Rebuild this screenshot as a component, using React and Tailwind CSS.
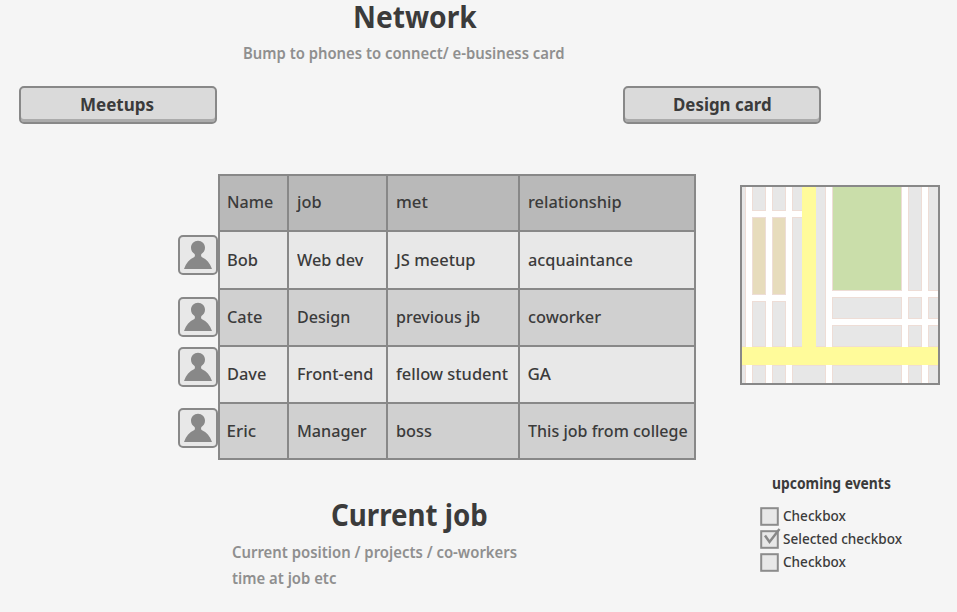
import { useLayoutEffect, useRef } from "react";

// Condenses or widens a single line of text so that it spans a given width.
function Fit({ w, children, className = "" }) {
  const ref = useRef(null);
  useLayoutEffect(() => {
    const el = ref.current;
    const fit = () => {
      el.style.transform = `scaleX(${w / el.offsetWidth})`;
    };
    fit();
    document.fonts.ready.then(fit);
  }, [w, children]);
  return (
    <span ref={ref} className={`inline-block w-max origin-left whitespace-nowrap ${className}`}>
      {children}
    </span>
  );
}

function Button({ label, w, indent }) {
  return (
    <button className={`flex h-[38px] w-[198px] items-start rounded-[5px] border-2 border-[#888] bg-[#dadada] pt-1 text-[18.5px] leading-6 font-bold shadow-[inset_0_-3px_0_#ababab] ${indent}`}>
      <Fit w={w}>{label}</Fit>
    </button>
  );
}

function Avatar({ className }) {
  return (
    <svg viewBox="0 0 40 40" className={`block size-10 ${className}`}>
      <rect x="1" y="1" width="38" height="38" rx="4" fill="#e8e8e8" stroke="#888" strokeWidth="2" />
      <path
        d="M20 5.800C16.100 5.800 13 8.900 13 12.800C13 15.500 14.500 17.700 16.600 19C17.200 20.500 17 21.500 16 22.300C11.500 24.200 8.200 28 6 34H34C31.800 28 28.500 24.200 24 22.300C23 21.500 22.800 20.500 23.400 19C25.500 17.700 27 15.500 27 12.800C27 8.900 23.900 5.800 20 5.800Z"
        fill="#888"
      />
    </svg>
  );
}

const rows = [
  [["Name", 46.5], ["job", 25], ["met", 31.5], ["relationship", 93.5]],
  [["Bob", 31], ["Web dev", 66], ["JS meetup", 79.5], ["acquaintance", 104.5]],
  [["Cate", 35.5], ["Design", 53], ["previous jb", 84], ["coworker", 73]],
  [["Dave", 39.5], ["Front-end", 76.5], ["fellow student", 112], ["GA", 24]],
  [["Eric", 30], ["Manager", 69.5], ["boss", 35.5], ["This job from college", 159.5]],
];
const rowBg = ["bg-[#b9b9b9] pb-[2px]", "bg-[#e8e8e8]", "bg-[#d0d0d0] pb-[2px]", "bg-[#e8e8e8] pb-[2px]", "bg-[#d0d0d0]"];

function People() {
  return (
    <div className="grid grid-cols-[67px_97px_130px_174px] grid-rows-[54px_56px_55px_55px_54px] gap-[2px] border-2 border-[#888] bg-[#888] text-[17px] leading-6 font-medium">
      {rows.map((row, r) =>
        row.map(([text, w], c) => (
          <div key={text} className={`flex items-center ${c === 0 ? "pl-[6.5px]" : "pl-[7.5px]"} ${rowBg[r]}`}>
            <Fit w={w}>{text}</Fit>
          </div>
        ))
      )}
    </div>
  );
}

// City blocks as [x, y, width, height].
const blocks = [
  [-1, -1, 5, 161], [10, -1, 14, 25], [30, -1, 14, 25], [50, -1, 11, 25],
  [50, 30, 11, 130], [10, 114, 14, 46], [30, 114, 14, 46], [73, -1, 11, 161],
  [166, -1, 14, 105], [186, -1, 11, 105],
  [90, 110, 70, 22], [166, 110, 14, 22], [186, 110, 11, 22],
  [90, 138, 70, 22], [166, 138, 14, 22], [186, 138, 11, 22],
  [-1, 178, 5, 19], [10, 178, 14, 19], [30, 178, 14, 19], [50, 178, 34, 19],
  [90, 178, 70, 19], [166, 178, 14, 19], [186, 178, 11, 19],
];

function Block({ box: [x, y, w, h], fill }) {
  return <rect x={x + 0.5} y={y + 0.5} width={w - 1} height={h - 1} fill={fill} stroke="#eeddd6" />;
}

function CityMap() {
  return (
    <svg viewBox="0 0 196 196" className="box-border block size-[200px] border-2 border-[#888] bg-white">
      {blocks.map((b) => (
        <Block key={b.join()} box={b} fill="#e7e7e7" />
      ))}
      <Block box={[10, 30, 14, 78]} fill="#e7dcbc" />
      <Block box={[30, 30, 14, 78]} fill="#e7dcbc" />
      <Block box={[90, -1, 70, 105]} fill="#cadeaa" />
      <rect x="60" y="0" width="14" height="170" fill="#fffb9a" />
      <rect x="0" y="160" width="196" height="18" fill="#fffb9a" />
    </svg>
  );
}

function Check({ label, w, checked }) {
  return (
    <label className="flex h-[23px] items-start gap-[3px] text-[14px] leading-[18px] font-medium">
      <svg viewBox="0 0 20 20" className="block size-5 overflow-visible">
        <rect x="1.200" y="1.200" width="16.600" height="16.600" fill="#e8e8e8" stroke="#8c8c8c" strokeWidth="2" />
        {checked && <path d="M5 5.500L9.500 12L19.500 -1" fill="none" stroke="#888" strokeWidth="2.500" />}
      </svg>
      <Fit w={w}>{label}</Fit>
    </label>
  );
}

export default function App() {
  return (
    <div className="flex h-[612px] w-[957px] bg-[#f5f5f5] font-['Noto_Sans','Open_Sans',sans-serif] text-[#3b3b3b]">
      <main className="w-[740px] shrink-0">
        <h1 className="flex h-[41px] items-start pl-[352.5px] text-[30px] leading-[33px] font-bold">
          <Fit w={124}>Network</Fit>
        </h1>
        <p className="flex h-[45px] items-start pl-[242.5px] text-[16px] leading-6 font-semibold text-[#8f8f8f]">
          <Fit w={321}>Bump to phones to connect/ e-business card</Fit>
        </p>
        <div className="flex h-[88px] w-[821px] items-start justify-between pl-[19px]">
          <Button label="Meetups" w={74.5} indent="pl-[59px]" />
          <Button label="Design card" w={98.5} indent="pl-[47.5px]" />
        </div>
        <div className="flex pl-[178px]">
          <div className="flex flex-col pt-[61px]">
            <Avatar />
            <Avatar className="mt-[22px]" />
            <Avatar className="mt-[10px]" />
            <Avatar className="mt-[21px]" />
          </div>
          <People />
        </div>
        <h2 className="mt-[39px] flex h-[40px] items-start pl-[330.5px] text-[30px] leading-8 font-bold">
          <Fit w={157}>Current job</Fit>
        </h2>
        <div className="flex flex-col items-start pl-[231.5px] text-[16px] leading-[26px] font-semibold text-[#8f8f8f]">
          <Fit w={285.5}>Current position / projects / co-workers</Fit>
          <Fit w={104}>time at job etc</Fit>
        </div>
      </main>
      <aside className="pt-[185px]">
        <CityMap />
        <h3 className="mt-[86px] flex h-[36px] items-start pl-[32px] text-[15.5px] leading-6 font-bold">
          <Fit w={119}>upcoming events</Fit>
        </h3>
        <div className="pl-5">
          <Check label="Checkbox" w={63} />
          <Check label="Selected checkbox" w={119} checked />
          <Check label="Checkbox" w={63} />
        </div>
      </aside>
    </div>
  );
}
